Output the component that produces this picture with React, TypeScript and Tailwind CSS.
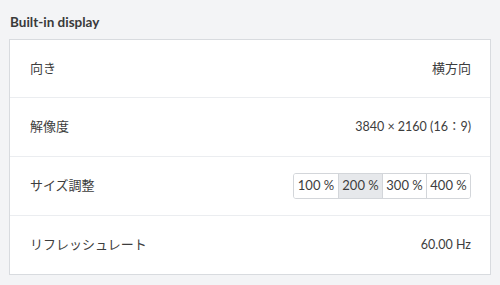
import React from "react";

const rows: { label: string; value?: string; buttons?: boolean; cjk?: boolean }[] = [
  { label: "向き", value: "横方向", cjk: true },
  { label: "解像度", value: "3840 × 2160 (16：9)" },
  { label: "サイズ調整", buttons: true },
  { label: "リフレッシュレート", value: "60.00 Hz" },
];

const scales = ["100 %", "200 %", "300 %", "400 %"];

export default function App() {
  return (
    <div
      className="w-[500px] h-[285px] bg-[#f3f4f6] px-[9px] pt-[12px] text-[#333333]"
      style={{ fontFamily: 'Lato, "Noto Sans CJK JP", sans-serif' }}
    >
      <div className="h-[20px] leading-[20px] text-[13.5px] font-bold text-[#3a3a3a] pl-[1px] mb-[7px]">
        Built-in display
      </div>
      <div className="bg-white border border-[#d8dbdf]">
        {rows.map((r, i) => (
          <div
            key={r.label}
            className={
              i === 0
                ? "h-[57px] flex items-center justify-between pl-[20px] pr-[19px]"
                : "h-[59px] border-t border-[#ebedf0] flex items-center justify-between pl-[20px] pr-[19px]"
            }
          >
            <span className="text-[13px] text-[#3d3d3d]">{r.label}</span>
            {r.buttons ? (
              <div className="flex h-[26px] border border-[#d3d6da] rounded-[3px] overflow-hidden">
                {scales.map((s, j) => (
                  <div
                    key={s}
                    className={
                      (j === 1 ? "bg-[#e6e8eb] " : "bg-white ") +
                      (j > 0 ? "border-l border-[#d3d6da] " : "") +
                      "w-[44px] flex items-center justify-center text-[13px] text-[#3d3d3d]"
                    }
                  >
                    {s}
                  </div>
                ))}
              </div>
            ) : (
              <span className={r.cjk ? "text-[13px] text-[#3d3d3d]" : "text-[12.5px] text-[#3d3d3d]"}>
                {r.value}
              </span>
            )}
          </div>
        ))}
      </div>
    </div>
  );
}
